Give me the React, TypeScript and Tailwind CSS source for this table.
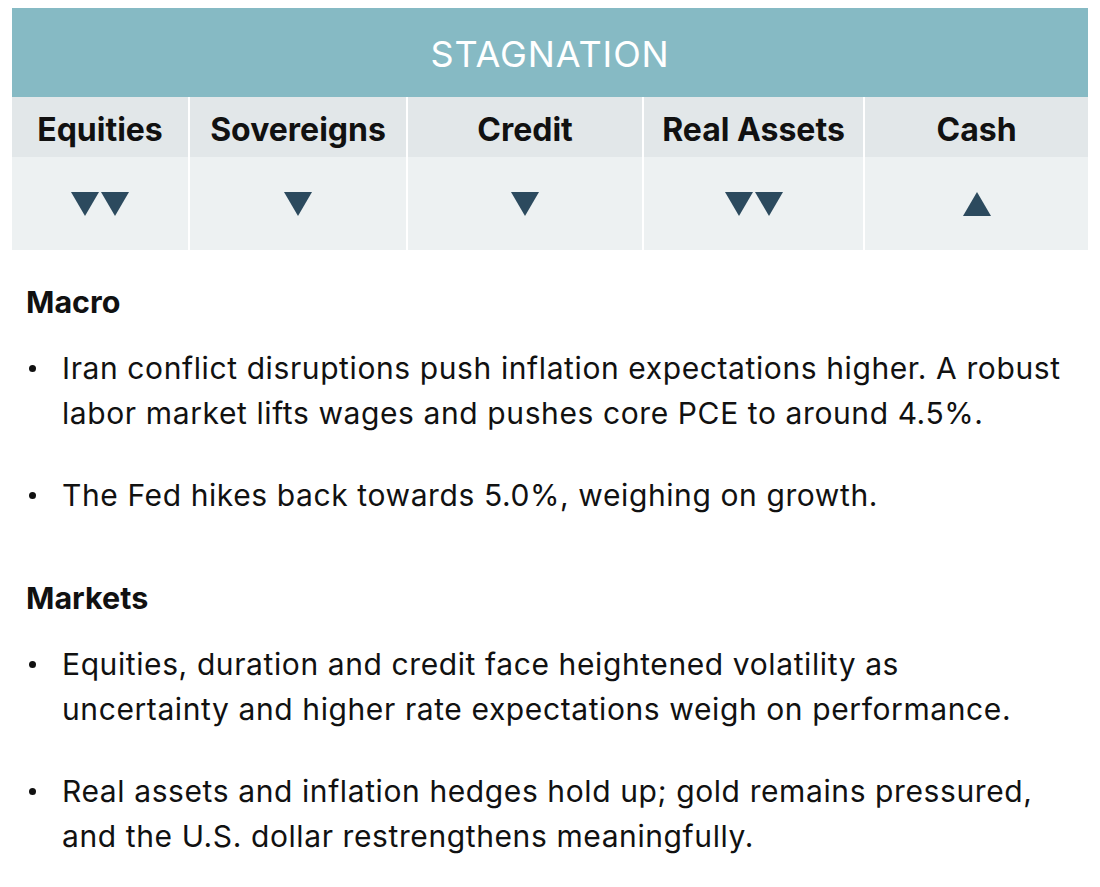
import React from "react";

type Dir = "down" | "up";

const columns: { label: string; arrows: Dir[] }[] = [
  { label: "Equities", arrows: ["down", "down"] },
  { label: "Sovereigns", arrows: ["down"] },
  { label: "Credit", arrows: ["down"] },
  { label: "Real Assets", arrows: ["down", "down"] },
  { label: "Cash", arrows: ["up"] },
];

// each bullet is kept as its printed lines so the wrap matches the source
const sections: { title: string; bullets: string[][] }[] = [
  {
    title: "Macro",
    bullets: [
      [
        "Iran conflict disruptions push inflation expectations higher. A robust",
        "labor market lifts wages and pushes core PCE to around 4.5%.",
      ],
      ["The Fed hikes back towards 5.0%, weighing on growth."],
    ],
  },
  {
    title: "Markets",
    bullets: [
      [
        "Equities, duration and credit face heightened volatility as",
        "uncertainty and higher rate expectations weigh on performance.",
      ],
      [
        "Real assets and inflation hedges hold up; gold remains pressured,",
        "and the U.S. dollar restrengthens meaningfully.",
      ],
    ],
  },
];

function Triangle({ dir }: { dir: Dir }) {
  return (
    <svg width="28" height="24" viewBox="0 0 28 24" className="block">
      {dir === "down" ? (
        <polygon points="0,0 28,0 14,24" fill="#2c4a5e" />
      ) : (
        <polygon points="14,0 28,24 0,24" fill="#2c4a5e" />
      )}
    </svg>
  );
}

export default function App() {
  return (
    <div className="w-[1100px] h-[887px] bg-white pt-2 px-3 text-[#111] font-['Inter','Liberation_Sans',sans-serif]">
      {/* Scenario band */}
      <div className="h-[89px] bg-[#86bac4] flex items-center justify-center text-white text-[36px] tracking-[0.025em] pt-[2px]">
        STAGNATION
      </div>

      {/* Asset class table */}
      <div className="grid grid-cols-[176px_216px_234px_219px_223px] gap-x-[2px]">
        {columns.map((c) => (
          <div
            key={c.label}
            className="h-[60px] bg-[#e2e7e9] flex items-center justify-center pt-[5px] text-[32px] font-bold"
          >
            {c.label}
          </div>
        ))}
        {columns.map((c) => (
          <div
            key={c.label + "-arrows"}
            className="h-[93px] bg-[#edf1f2] flex items-center justify-center gap-[2px] pt-[1px]"
          >
            {c.arrows.map((d, i) => (
              <Triangle key={i} dir={d} />
            ))}
          </div>
        ))}
      </div>

      {/* Commentary */}
      <div className="pl-[14px] pt-[30px]">
        {sections.map((s, si) => (
          <div key={s.title} className={si > 0 ? "mt-[58px]" : ""}>
            <h2 className="text-[30.5px] leading-[44px] font-bold">{s.title}</h2>
            <ul className="mt-[22px] flex flex-col gap-[37px]">
              {s.bullets.map((lines) => (
                <li key={lines[0]} className="flex text-[30px] leading-[45px] tracking-[0.02em]">
                  <span className="w-[36px] shrink-0 flex items-start">
                    <span className="mt-[19px] ml-[3px] w-[7px] h-[7px] rounded-full bg-[#111]" />
                  </span>
                  <span className="whitespace-nowrap">
                    {lines.map((l, i) => (
                      <span key={i} className="block">
                        {l}
                      </span>
                    ))}
                  </span>
                </li>
              ))}
            </ul>
          </div>
        ))}
      </div>
    </div>
  );
}
